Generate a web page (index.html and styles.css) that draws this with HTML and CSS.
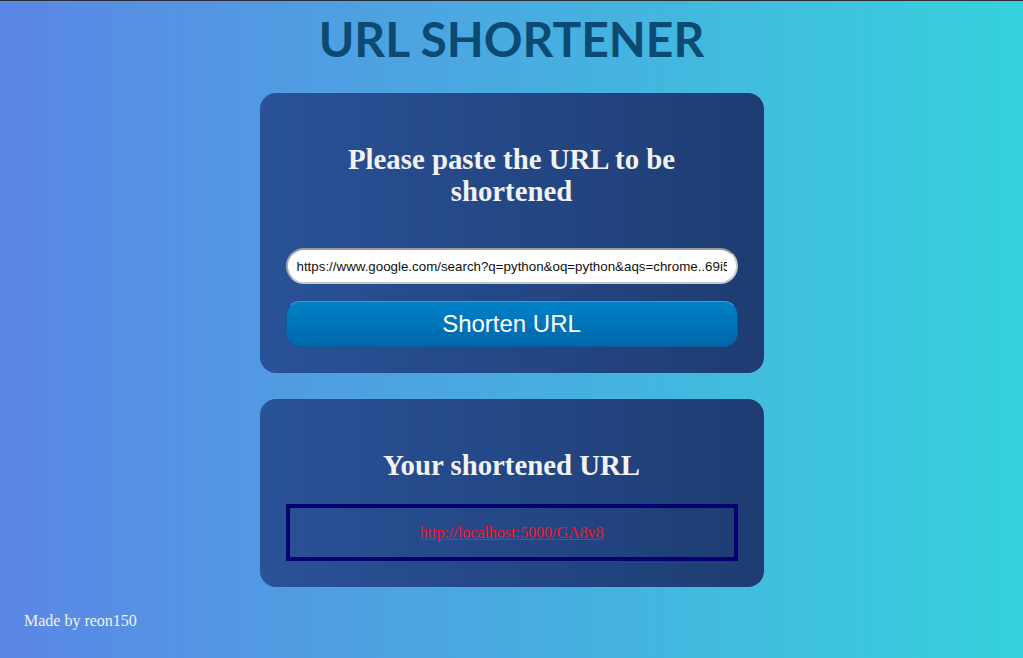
FILE: index.html
```html
<!DOCTYPE html>
<html lang="en">
<head>
<meta charset="utf-8">
<title>URL Shortener</title>
<link rel="stylesheet" href="styles.css">
</head>
<body>
<header class="site-header">
  <h1 class="title">URL SHORTENER</h1>
</header>
<main class="main">
  <section class="card">
    <h2 class="card-heading">Please paste the URL to be shortened</h2>
    <form class="shorten-form">
      <input class="url-input" type="text" value="https://www.google.com/search?q=python&amp;oq=python&amp;aqs=chrome..69i57j0l7.1234j0j7&amp;sourceid=chrome&amp;ie=UTF-8">
      <button class="shorten-btn" type="button">Shorten URL</button>
    </form>
  </section>
  <section class="card">
    <h2 class="card-heading">Your shortened URL</h2>
    <div class="result-box">
      <a class="result-link" href="#">http://localhost:5000/GA8v8</a>
    </div>
  </section>
</main>
<footer class="footer">Made by reon150</footer>
</body>
</html>
```
FILE: styles.css
```css
html, body {
  height: 100%;
}
body {
  margin: 0;
  border-top: 1px solid #2a2d33;
  box-sizing: border-box;
  background: linear-gradient(to right, #5b86e5, #36d1dc);
  font-family: "Liberation Serif", "Times New Roman", serif;
  color: #f0f0f0;
  overflow: hidden;
}
.site-header {
  padding-top: 9px;
  text-align: center;
}
.title {
  margin: 0;
  font-family: Lato, "Liberation Sans", sans-serif;
  font-weight: 700;
  font-size: 48px;
  line-height: 58px;
  color: #0b4a72;
}
.main {
  display: flex;
  flex-direction: column;
  align-items: center;
  gap: 26px;
  margin-top: 25px;
}
.card {
  width: 504px;
  box-sizing: border-box;
  padding: 50px 26px 26px;
  border-radius: 16px;
  background: linear-gradient(to right, #2a5298, #1e3c72);
}
.card-heading {
  margin: 0;
  font-family: "Liberation Serif", "Times New Roman", serif;
  font-weight: 700;
  font-size: 28.8px;
  line-height: 32px;
  text-align: center;
  color: #f2f2f2;
}
.shorten-form {
  display: flex;
  flex-direction: column;
  gap: 17px;
  margin-top: 41px;
}
.url-input {
  height: 36px;
  box-sizing: border-box;
  padding: 0 9px;
  border: 2px solid #c8c8c8;
  border-top-color: #9a9a9a;
  border-left-color: #a8a8a8;
  border-radius: 18px;
  background: #fff;
  font-family: "Liberation Sans", Arial, sans-serif;
  font-size: 13.33px;
  color: #111;
  outline: none;
}
.shorten-btn {
  height: 46px;
  border: 1px solid #0a5b98;
  border-top-color: #3d9ad8;
  border-radius: 14px;
  background: linear-gradient(to bottom, #0082c8, #0067aa);
  font-family: "Liberation Sans", Arial, sans-serif;
  font-size: 24px;
  color: #fff;
  cursor: pointer;
}
.result-box {
  margin-top: 23px;
  height: 57px;
  box-sizing: border-box;
  border: 4px solid #010170;
  display: flex;
  align-items: center;
  justify-content: center;
}
.result-link {
  font-family: "Liberation Serif", "Times New Roman", serif;
  font-size: 16px;
  color: #ff1020;
  text-decoration: underline;
}
.footer {
  margin-top: 25px;
  padding-left: 24px;
  font-size: 16px;
  line-height: 18px;
  color: #f2f2f2;
}
```
